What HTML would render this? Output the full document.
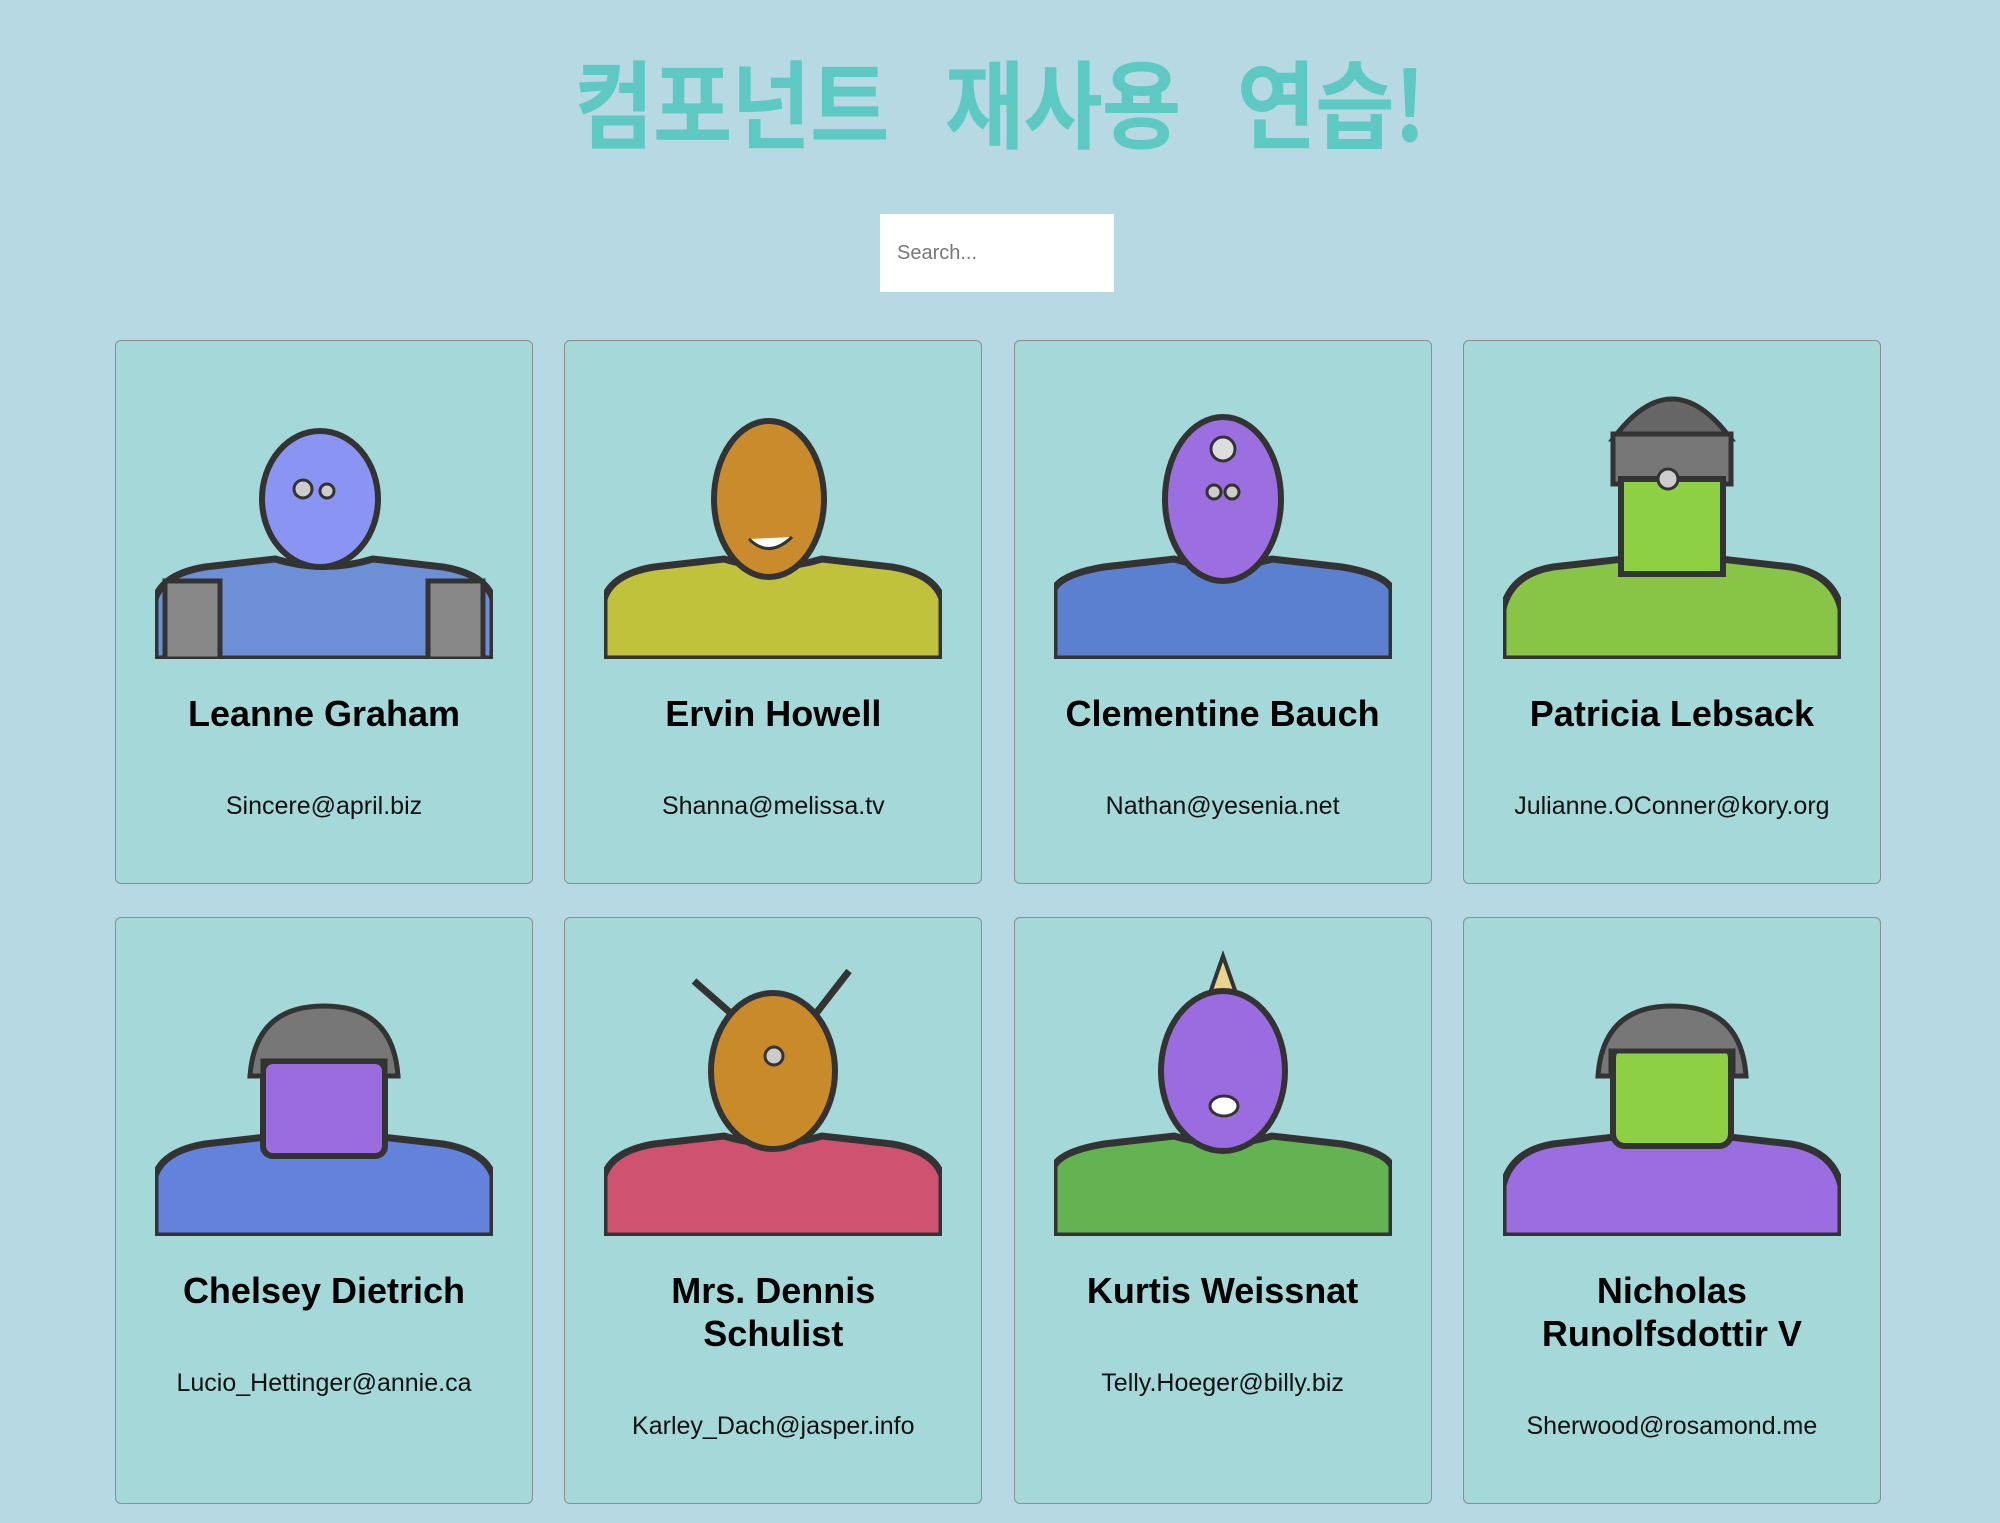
<!DOCTYPE html>
<html><head><meta charset="utf-8">
<style>
html,body{margin:0;padding:0}
body{width:2000px;height:1523px;background:#b7d9e3;font-family:"Liberation Sans","Noto Sans CJK KR",sans-serif;overflow:hidden;position:relative}
h1{position:absolute;top:40px;left:0;width:2000px;margin:0;text-align:center;font-family:"Noto Sans CJK KR","NanumGothic",sans-serif;font-weight:700;font-size:96px;line-height:120px;color:#5ec9c2;}
h1 span{display:inline-block;transform:scaleX(0.9);letter-spacing:-1px;white-space:pre}
.search{position:absolute;left:880px;top:214px;width:234px;height:78px;background:#fff;box-sizing:border-box;padding-left:17px;font-size:20px;line-height:78px;color:#777}
.grid{position:absolute;left:115px;top:340px;width:1766px;display:grid;grid-template-columns:repeat(4,418px);column-gap:31.3px;row-gap:33px}
.card{background:#a5d8d8;border:1px solid #8a8f90;border-radius:6px;box-sizing:border-box;text-align:center;padding:18px 0 62px}
.card svg{display:block;margin:0 auto;width:338px;height:300px}
.card h2{margin:33px 40px 0;font-size:36px;line-height:43px;font-weight:700;color:#000}
.card p{margin:56px 0 0;font-size:25px;line-height:30px;color:#111}
</style></head><body>
<h1><span>컴포넌트   재사용   연습!</span></h1>
<div class="search">Search...</div>
<div class="grid">
<div class="card"><svg viewBox="0 0 338 300"><path d="M0,300 L0,240 Q8,215 50,208 L120,200 Q169,215 218,200 L288,208 Q330,215 338,240 L338,300Z" fill="#6d8fd8" stroke="#333" stroke-width="7"/><rect x="10" y="222" width="55" height="78" fill="#888" stroke="#333" stroke-width="5"/><rect x="273" y="222" width="55" height="78" fill="#888" stroke="#333" stroke-width="5"/><ellipse cx="165" cy="140" rx="58" ry="68" fill="#8a94f2" stroke="#333" stroke-width="6"/><circle cx="148" cy="130" r="9" fill="#ccc" stroke="#333" stroke-width="3"/><circle cx="172" cy="132" r="7" fill="#ccc" stroke="#333" stroke-width="3"/></svg><h2>Leanne Graham</h2><p>Sincere@april.biz</p></div>
<div class="card"><svg viewBox="0 0 338 300"><path d="M0,300 L0,240 Q8,215 50,208 L120,200 Q169,215 218,200 L288,208 Q330,215 338,240 L338,300Z" fill="#c0c23c" stroke="#333" stroke-width="7"/><ellipse cx="165" cy="140" rx="55" ry="78" fill="#c98b2b" stroke="#333" stroke-width="6"/><path d="M145,180 Q165,200 188,178" fill="#fff" stroke="#333" stroke-width="3"/></svg><h2>Ervin Howell</h2><p>Shanna@melissa.tv</p></div>
<div class="card"><svg viewBox="0 0 338 300"><path d="M0,300 L0,230 Q8,215 50,208 L120,200 Q169,215 218,200 L288,208 Q330,215 338,230 L338,300Z" fill="#5b80cf" stroke="#333" stroke-width="7"/><ellipse cx="169" cy="140" rx="58" ry="82" fill="#9c6fe0" stroke="#333" stroke-width="6"/><circle cx="169" cy="90" r="12" fill="#ddd" stroke="#333" stroke-width="3"/><circle cx="160" cy="133" r="7" fill="#ccc" stroke="#333" stroke-width="3"/><circle cx="178" cy="133" r="7" fill="#ccc" stroke="#333" stroke-width="3"/></svg><h2>Clementine Bauch</h2><p>Nathan@yesenia.net</p></div>
<div class="card"><svg viewBox="0 0 338 300"><path d="M0,300 L0,250 Q8,215 50,208 L120,200 Q169,215 218,200 L288,208 Q330,215 338,250 L338,300Z" fill="#88c445" stroke="#333" stroke-width="7"/><path d="M110,80 Q169,0 228,80Z" fill="#666" stroke="#333" stroke-width="5"/><rect x="110" y="75" width="118" height="50" fill="#777" stroke="#333" stroke-width="5"/><rect x="118" y="120" width="102" height="95" fill="#8ed044" stroke="#333" stroke-width="6"/><circle cx="165" cy="120" r="10" fill="#ccc" stroke="#333" stroke-width="3"/></svg><h2>Patricia Lebsack</h2><p>Julianne.OConner@kory.org</p></div>
<div class="card"><svg viewBox="0 0 338 300"><path d="M0,300 L0,240 Q8,215 50,208 L120,200 Q169,215 218,200 L288,208 Q330,215 338,240 L338,300Z" fill="#6282dc" stroke="#333" stroke-width="7"/><rect x="108" y="125" width="122" height="95" rx="10" fill="#9b6cde" stroke="#333" stroke-width="6"/><path d="M95,140 Q100,70 169,70 Q238,70 243,140 L230,140 L230,125 L108,125 L108,140Z" fill="#777" stroke="#333" stroke-width="5"/></svg><h2>Chelsey Dietrich</h2><p>Lucio_Hettinger@annie.ca</p></div>
<div class="card"><svg viewBox="0 0 338 300"><path d="M0,300 L0,240 Q8,215 50,208 L120,200 Q169,215 218,200 L288,208 Q330,215 338,240 L338,300Z" fill="#cf5270" stroke="#333" stroke-width="7"/><path d="M130,80 L90,45 M210,80 L245,35" stroke="#333" stroke-width="7"/><ellipse cx="169" cy="135" rx="62" ry="78" fill="#c98a2a" stroke="#333" stroke-width="6"/><circle cx="170" cy="120" r="9" fill="#ccc" stroke="#333" stroke-width="3"/></svg><h2>Mrs. Dennis Schulist</h2><p>Karley_Dach@jasper.info</p></div>
<div class="card"><svg viewBox="0 0 338 300"><path d="M0,300 L0,230 Q8,215 50,208 L120,200 Q169,215 218,200 L288,208 Q330,215 338,230 L338,300Z" fill="#64b352" stroke="#333" stroke-width="7"/><path d="M155,60 L169,20 L183,60Z" fill="#e8d48a" stroke="#333" stroke-width="4"/><ellipse cx="169" cy="135" rx="62" ry="80" fill="#9a6cdf" stroke="#333" stroke-width="6"/><ellipse cx="170" cy="170" rx="14" ry="10" fill="#fff" stroke="#333" stroke-width="3"/></svg><h2>Kurtis Weissnat</h2><p>Telly.Hoeger@billy.biz</p></div>
<div class="card"><svg viewBox="0 0 338 300"><path d="M0,300 L0,250 Q8,215 50,208 L120,200 Q169,215 218,200 L288,208 Q330,215 338,250 L338,300Z" fill="#9a6ee0" stroke="#333" stroke-width="7"/><rect x="110" y="110" width="118" height="100" rx="12" fill="#8ed044" stroke="#333" stroke-width="6"/><path d="M95,140 Q100,70 169,70 Q238,70 243,140 L230,140 L230,115 L108,115 L108,140Z" fill="#777" stroke="#333" stroke-width="5"/></svg><h2>Nicholas Runolfsdottir V</h2><p>Sherwood@rosamond.me</p></div>
</div>
</body></html>
